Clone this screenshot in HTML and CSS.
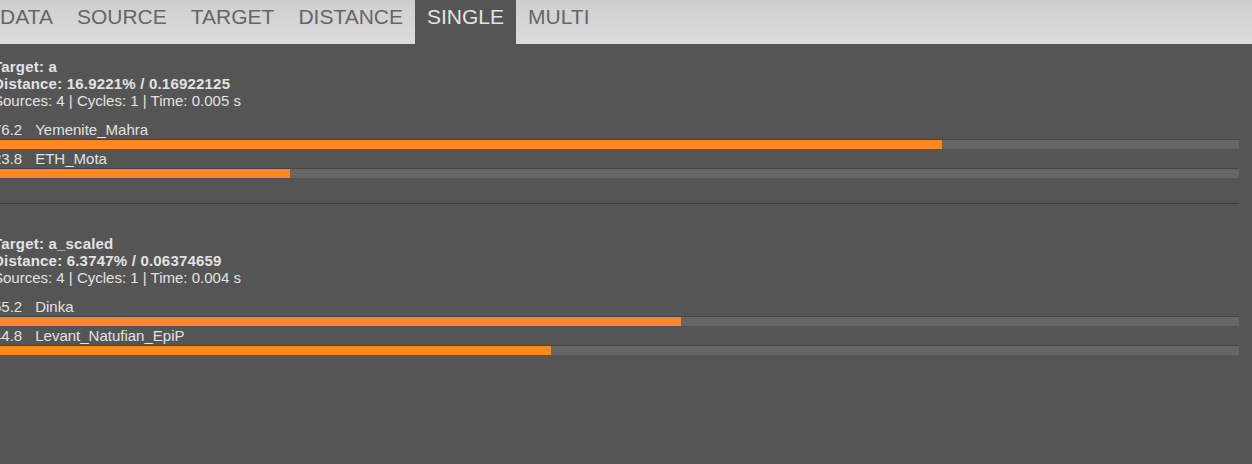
FILE: index.html
```html
<!DOCTYPE html>
<html lang="en">
<head>
    <meta charset="UTF-8">
    <meta name="viewport" content="width=device-width, initial-scale=1.0">
    <title>Single</title>
    <link rel="stylesheet" href="styles.css">
</head>
<body>
    <nav class="tabs">
        <a class="tab">DATA</a>
        <a class="tab">SOURCE</a>
        <a class="tab">TARGET</a>
        <a class="tab">DISTANCE</a>
        <a class="tab active">SINGLE</a>
        <a class="tab">MULTI</a>
    </nav>

    <div class="content">
        <div class="result">
            <div class="head">Target: a</div>
            <div class="head">Distance: 16.9221% / 0.16922125</div>
            <div class="info">Sources: 4 | Cycles: 1 | Time: 0.005 s</div>
            <div class="rows">
                <div class="row">
                    <div class="label"><span class="pct">76.2</span>Yemenite_Mahra</div>
                    <div class="track"><div class="fill" style="width: 76.2%"></div></div>
                </div>
                <div class="row">
                    <div class="label"><span class="pct">23.8</span>ETH_Mota</div>
                    <div class="track"><div class="fill" style="width: 23.8%"></div></div>
                </div>
            </div>
        </div>

        <div class="result">
            <div class="head">Target: a_scaled</div>
            <div class="head">Distance: 6.3747% / 0.06374659</div>
            <div class="info">Sources: 4 | Cycles: 1 | Time: 0.004 s</div>
            <div class="rows">
                <div class="row">
                    <div class="label"><span class="pct">55.2</span>Dinka</div>
                    <div class="track"><div class="fill" style="width: 55.2%"></div></div>
                </div>
                <div class="row">
                    <div class="label"><span class="pct">44.8</span>Levant_Natufian_EpiP</div>
                    <div class="track"><div class="fill" style="width: 44.8%"></div></div>
                </div>
            </div>
        </div>
    </div>
</body>
</html>
```

FILE: styles.css
```css
:root {
    --bg-color: #555555;
    --text-color: #e2e2e2;
    --tab-text: #666666;
    --track-color: #666666;
    --bar-color: #ff8822;
    --line-color: #3c3c3c;
}

body {
    margin: 0;
    font-family: 'Liberation Sans', Arial, sans-serif;
    background-color: var(--bg-color);
    color: var(--text-color);
    overflow: hidden;
}

.tabs {
    display: flex;
    height: 44px;
    background: linear-gradient(#cfcfcf, #dcdcdc);
}

.tab {
    padding: 0 12px;
    font-size: 21px;
    line-height: 33px;
    color: var(--tab-text);
    cursor: pointer;
}

.tab:first-child {
    margin-left: -12px;
}

.tab.active {
    background: var(--bg-color);
    color: #e4e4e4;
}

.content {
    margin: 0 13px 0 -7px;
    font-size: 15px;
}

.result {
    padding-top: 14px;
}

.result + .result {
    margin-top: 25px;
    padding-top: 31px;
    border-top: 1px solid var(--line-color);
}

.head {
    font-weight: bold;
    line-height: 17px;
    letter-spacing: 0.2px;
}

.info {
    line-height: 17px;
}

.rows {
    margin-top: 11px;
}

.label {
    line-height: 18px;
    padding-top: 1px;
}

.pct {
    display: inline-block;
    margin-right: 13px;
}

.track {
    height: 9px;
    background: var(--track-color);
    border-top: 1px solid #464646;
}

.fill {
    height: 100%;
    background: var(--bar-color);
}
```
